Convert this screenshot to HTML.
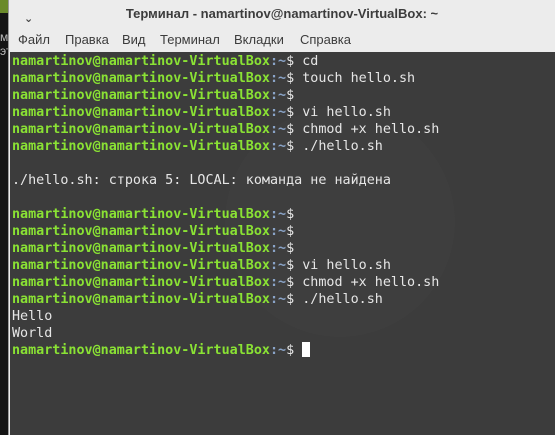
<!DOCTYPE html><html><head><meta charset="utf-8"><style>
body{margin:0;width:555px;height:435px;overflow:hidden;background:#111;position:relative;font-family:"Liberation Sans","DejaVu Sans",sans-serif}
#strip{position:absolute;left:0;top:0;width:8px;height:435px;background:#141414}
#strip .g{position:absolute;left:0;top:0;width:8px;height:13px;background:#6a8a2a}
#strip .t{position:absolute;left:0;color:#bbb;font-size:12px}
#win{position:absolute;left:8px;top:0;right:0;bottom:0;background:#ececec;border-left:1px solid #9a9a9a}
#title{position:absolute;top:0;left:0;right:0;height:28px;text-align:center;line-height:28px;font-size:13px;font-weight:bold;color:#3c3c3c}
#chev{position:absolute;left:15px;top:5px;font-size:11px;color:#444}
#menu{position:absolute;top:28px;left:0;right:0;height:24px;font-size:13px;color:#3c3c3c;line-height:24px}
#menu span{position:absolute}
#term{position:absolute;top:52px;left:1px;right:0;bottom:0;background:#3c3c3c;font-family:"DejaVu Sans Mono","Liberation Mono",monospace;font-size:13.4px;line-height:17px;color:#e6e6e6;padding:1px 0 0 2px;white-space:pre}
.p{color:#8ae234;font-weight:bold}.c{color:#8aa4c8;font-weight:bold}
.cur{display:inline-block;width:8px;height:15px;background:#fff;vertical-align:-3px}
#logo{position:absolute;left:215px;top:55px;width:230px;height:230px;border-radius:50%;background:#3e3e3e}
</style></head><body>
<div id="strip"><div class="g"></div><div class="t" style="top:30px">м</div><div class="t" style="top:44px">эт</div></div>
<div id="win">
<div id="title"><span id="chev">&#8964;</span>Терминал - namartinov@namartinov-VirtualBox: ~</div>
<div id="menu"><span style="left:9px">Файл</span><span style="left:56px">Правка</span><span style="left:113px">Вид</span><span style="left:151px">Терминал</span><span style="left:225px">Вкладки</span><span style="left:291px">Справка</span></div>
<div id="term"><div id="logo"></div><div style="position:relative"><span class="p">namartinov@namartinov-VirtualBox</span><span class="c">:~</span>$ cd
<span class="p">namartinov@namartinov-VirtualBox</span><span class="c">:~</span>$ touch hello.sh
<span class="p">namartinov@namartinov-VirtualBox</span><span class="c">:~</span>$ 
<span class="p">namartinov@namartinov-VirtualBox</span><span class="c">:~</span>$ vi hello.sh
<span class="p">namartinov@namartinov-VirtualBox</span><span class="c">:~</span>$ chmod +x hello.sh
<span class="p">namartinov@namartinov-VirtualBox</span><span class="c">:~</span>$ ./hello.sh

./hello.sh: строка 5: LOCAL: команда не найдена

<span class="p">namartinov@namartinov-VirtualBox</span><span class="c">:~</span>$ 
<span class="p">namartinov@namartinov-VirtualBox</span><span class="c">:~</span>$ 
<span class="p">namartinov@namartinov-VirtualBox</span><span class="c">:~</span>$ 
<span class="p">namartinov@namartinov-VirtualBox</span><span class="c">:~</span>$ vi hello.sh
<span class="p">namartinov@namartinov-VirtualBox</span><span class="c">:~</span>$ chmod +x hello.sh
<span class="p">namartinov@namartinov-VirtualBox</span><span class="c">:~</span>$ ./hello.sh
Hello
World
<span class="p">namartinov@namartinov-VirtualBox</span><span class="c">:~</span>$ <span class="cur"></span></div></div>
</div>
</body></html>
